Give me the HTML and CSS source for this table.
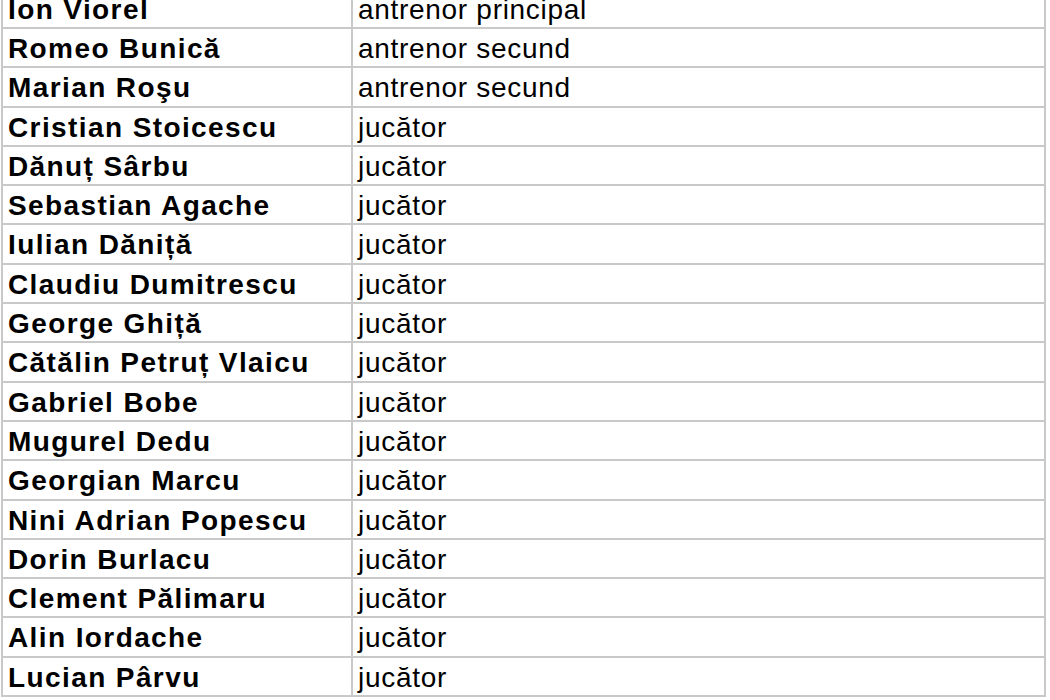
FILE: index.html
```html
<!DOCTYPE html>
<html lang="ro">
<head>
<meta charset="utf-8">
<title>Lot</title>
<link rel="stylesheet" href="styles.css">
</head>
<body>
<div class="sheet">
  <div class="name">Ion Viorel</div><div class="role">antrenor principal</div>
  <div class="name">Romeo Bunică</div><div class="role">antrenor secund</div>
  <div class="name">Marian Roşu</div><div class="role">antrenor secund</div>
  <div class="name">Cristian Stoicescu</div><div class="role">jucător</div>
  <div class="name">Dănuț Sârbu</div><div class="role">jucător</div>
  <div class="name">Sebastian Agache</div><div class="role">jucător</div>
  <div class="name">Iulian Dăniță</div><div class="role">jucător</div>
  <div class="name">Claudiu Dumitrescu</div><div class="role">jucător</div>
  <div class="name">George Ghiță</div><div class="role">jucător</div>
  <div class="name">Cătălin Petruț Vlaicu</div><div class="role">jucător</div>
  <div class="name">Gabriel Bobe</div><div class="role">jucător</div>
  <div class="name">Mugurel Dedu</div><div class="role">jucător</div>
  <div class="name">Georgian Marcu</div><div class="role">jucător</div>
  <div class="name">Nini Adrian Popescu</div><div class="role">jucător</div>
  <div class="name">Dorin Burlacu</div><div class="role">jucător</div>
  <div class="name">Clement Pălimaru</div><div class="role">jucător</div>
  <div class="name">Alin Iordache</div><div class="role">jucător</div>
  <div class="name">Lucian Pârvu</div><div class="role">jucător</div>
</div>
</body>
</html>
```
FILE: styles.css
```css
html, body {
  margin: 0;
  padding: 0;
  background: #ffffff;
  overflow: hidden;
}
body {
  font-family: "Liberation Sans", Arial, sans-serif;
  color: #000;
}
.sheet {
  display: grid;
  grid-template-columns: 348px 691px;
  grid-auto-rows: 37.3px;
  gap: 2px;
  padding: 2px;
  width: 1041px;
  margin: -12.3px 0 0 1px;
  background: #c9c9c9;
}
.name, .role {
  background: #fff;
  font-size: 28px;
  line-height: 35px;
  padding-top: 2px;
  white-space: nowrap;
  overflow: hidden;
}
.name {
  font-weight: bold;
  padding-left: 5px;
  letter-spacing: 1.4px;
}
.role {
  padding-left: 5px;
  letter-spacing: 0.7px;
}
```
